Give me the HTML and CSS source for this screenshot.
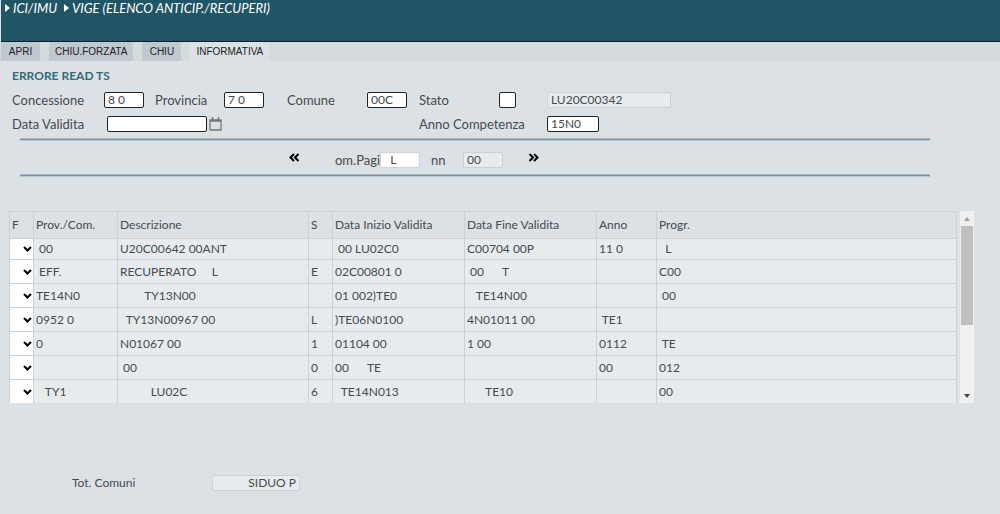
FILE: index.html
```html
<!DOCTYPE html>
<html lang="it">
<head>
<meta charset="utf-8">
<title>ICI/IMU - VIGE</title>
<link rel="stylesheet" href="styles.css">
</head>
<body>
<header class="banner">
  <nav class="crumbs">
    <span class="crumb"><svg class="arrow" viewBox="0 0 5 8"><path d="M0 0L5 4L0 8Z"/></svg>ICI/IMU</span>
    <span class="crumb"><svg class="arrow" viewBox="0 0 5 8"><path d="M0 0L5 4L0 8Z"/></svg>VIGE (ELENCO ANTICIP./RECUPERI)</span>
  </nav>
</header>
<div class="tabs">
  <button class="tab" type="button">APRI</button>
  <button class="tab" type="button">CHIU.FORZATA</button>
  <button class="tab" type="button">CHIU</button>
  <button class="tab active" type="button">INFORMATIVA</button>
</div>
<main>
  <h1 class="message">ERRORE READ TS</h1>
  <form class="filters">
    <label for="conc">Concessione</label>
    <input class="field short" id="conc" value="8 0">
    <label for="prov">Provincia</label>
    <input class="field short" id="prov" value="7 0">
    <label for="com">Comune</label>
    <input class="field short" id="com" value="00C">
    <label for="stato">Stato</label>
    <input class="field tiny" id="stato">
    <input class="field wide readonly" aria-label="Descrizione stato" value="LU20C00342" readonly>
    <label for="data">Data Validita</label>
    <div class="date">
      <input class="field date-input" id="data">
      <button class="calendar" type="button" aria-label="Calendario"><svg viewBox="0 0 13 15"><path d="M1 3H12V13H1ZM1 4H12" fill="none" stroke="#777" stroke-width="1.3"/><path d="M3.5 0V3M9.5 0V3" stroke="#777" stroke-width="1.5"/></svg></button>
    </div>
    <label class="anno-label" for="anno">Anno Competenza</label>
    <input class="field anno" id="anno" value="15N0">
  </form>
  <section class="pager">
    <button class="page-button" type="button" aria-label="Precedente"><svg viewBox="0 0 11 9"><path d="M5 1L1.5 4.5L5 8M9.5 1L6 4.5L9.5 8"/></svg></button>
    <label class="page-label" for="pag">om.Pagi</label>
    <input class="field short plain" id="pag" value="  L">
    <label class="page-label" for="tot">nn</label>
    <input class="field short readonly" id="tot" value="00" readonly>
    <button class="page-button" type="button" aria-label="Successiva"><svg viewBox="0 0 11 9"><path d="M1.5 1L5 4.5L1.5 8M6 1L9.5 4.5L6 8"/></svg></button>
  </section>
  <section class="list">
    <div class="viewport">
      <table class="grid">
        <colgroup><col class="c-f"><col class="c-prov"><col class="c-desc"><col class="c-s"><col class="c-date"><col class="c-date"><col class="c-anno"><col></colgroup>
        <thead>
          <tr><th>F</th><th>Prov./Com.</th><th>Descrizione</th><th>S</th><th>Data Inizio Validita</th><th>Data Fine Validita</th><th>Anno</th><th>Progr.</th></tr>
        </thead>
        <tbody>
          <tr><td class="pick"><div class="select"><select aria-label="F riga 1"><option></option></select><svg viewBox="0 0 9 6"><path d="M1 1L4.5 4.5L8 1"/></svg></div></td><td> 00</td><td>U20C00642 00ANT</td><td></td><td> 00 LU02C0</td><td>C00704 00P</td><td>11 0</td><td>  L</td></tr>
          <tr><td class="pick"><div class="select"><select aria-label="F riga 2"><option></option></select><svg viewBox="0 0 9 6"><path d="M1 1L4.5 4.5L8 1"/></svg></div></td><td> EFF.</td><td>RECUPERATO     L</td><td>E</td><td>02C00801 0</td><td> 00      T</td><td></td><td>C00</td></tr>
          <tr><td class="pick"><div class="select"><select aria-label="F riga 3"><option></option></select><svg viewBox="0 0 9 6"><path d="M1 1L4.5 4.5L8 1"/></svg></div></td><td>TE14N0</td><td>        TY13N00</td><td></td><td>01 002)TE0</td><td>   TE14N00</td><td></td><td> 00</td></tr>
          <tr><td class="pick"><div class="select"><select aria-label="F riga 4"><option></option></select><svg viewBox="0 0 9 6"><path d="M1 1L4.5 4.5L8 1"/></svg></div></td><td>0952 0</td><td>  TY13N00967 00</td><td>L</td><td>)TE06N0100</td><td>4N01011 00</td><td> TE1</td><td></td></tr>
          <tr><td class="pick"><div class="select"><select aria-label="F riga 5"><option></option></select><svg viewBox="0 0 9 6"><path d="M1 1L4.5 4.5L8 1"/></svg></div></td><td>0</td><td>N01067 00</td><td>1</td><td>01104 00</td><td>1 00</td><td>0112</td><td> TE</td></tr>
          <tr><td class="pick"><div class="select"><select aria-label="F riga 6"><option></option></select><svg viewBox="0 0 9 6"><path d="M1 1L4.5 4.5L8 1"/></svg></div></td><td></td><td> 00</td><td>0</td><td>00      TE</td><td></td><td>00</td><td>012</td></tr>
          <tr><td class="pick"><div class="select"><select aria-label="F riga 7"><option></option></select><svg viewBox="0 0 9 6"><path d="M1 1L4.5 4.5L8 1"/></svg></div></td><td>   TY1</td><td>          LU02C</td><td>6</td><td>  TE14N013</td><td>      TE10</td><td></td><td>00</td></tr>
        </tbody>
      </table>
    </div>
    <div class="scrollbar">
      <svg class="up" viewBox="0 0 6 4"><path d="M0 4L3 0L6 4Z"/></svg>
      <div class="thumb"></div>
      <svg class="down" viewBox="0 0 6 4"><path d="M0 0L3 4L6 0Z"/></svg>
    </div>
  </section>
  <footer class="totals">
    <label for="totcom">Tot. Comuni</label>
    <input class="field total readonly" id="totcom" value="SIDUO P" readonly>
  </footer>
</main>
</body>
</html>
```
FILE: styles.css
```css
* { box-sizing: border-box; }
body {
  margin: 0;
  background: #dce1e5;
  color: #454b4f;
  font-family: Lato, "Noto Sans", sans-serif;
  font-size: 12px;
  line-height: 16px;
}
button, input, select { font: inherit; color: inherit; margin: 0; padding: 0; border: 0; background: none; }
svg { display: block; }

.banner {
  height: 42px;
  margin-left: 1px;
  background: #205566;
  border-bottom: 1px solid #0c1e25;
  color: #fff;
}
.crumbs { display: flex; gap: 7px; padding-left: 4px; }
.crumb { display: flex; align-items: center; gap: 3px; font-size: 13px; font-style: italic; }
.arrow { width: 5px; height: 8px; fill: #fff; }

.tabs { display: flex; gap: 9px; padding-left: 1px; background: #d5dadd; }
.tab {
  min-width: 39px;
  height: 19px;
  padding: 0 6px;
  border-radius: 2px 2px 0 0;
  background: #c0c8d0;
  color: #222;
  font: 10px "Liberation Sans", sans-serif;
}
.tab.active { background: #dce1e5; }

.message { margin: 7px 0 0 12px; color: #326a7b; font-size: 12px; line-height: 16px; font-weight: 700; }

.filters {
  display: grid;
  grid-template-columns: 92px 51px 69px 63px 80px 52px 80px 48px auto;
  grid-auto-rows: 24px;
  align-items: center;
  justify-content: start;
  margin: 4px 0 0 12px;
}
.filters label { font-size: 13px; }
.field { height: 16px; padding: 0 3px; border: 1px solid #222; border-radius: 2px; background: #fff; white-space: pre; }
.short { width: 40px; }
.tiny { width: 17px; }
.wide { width: 124px; }
.anno { width: 52px; }
.date { grid-column: 2 / 7; display: flex; align-items: center; gap: 2px; padding-left: 3px; }
.date-input { width: 100px; }
.calendar svg { width: 13px; height: 15px; }
.anno-label { grid-column: span 2; }
.readonly { background: #e7ebee; border-color: #cdd1d3; }
.plain { border-color: #d0d3d5; }

.pager {
  display: grid;
  grid-template-columns: 46px 45px 51px 32px 65px auto;
  align-items: center;
  justify-content: start;
  height: 37px;
  margin: 3px 70px 0 20px;
  padding: 4px 0 0 269px;
  border-top: 1px solid #7594a0;
  border-bottom: 1px solid #7594a0;
  box-shadow: 0 1px #b8c8cf, 0 -1px #a9bdc6, inset 0 1px #b8c8cf, inset 0 -1px #a9bdc6;
}
.page-label { font-size: 13px; white-space: nowrap; }
.page-button { width: 11px; padding-bottom: 4px; }
.page-button svg { width: 11px; height: 9px; fill: none; stroke: #000; stroke-width: 2; }

.list { display: flex; gap: 3px; margin: 35px 26px 0 9px; }
.viewport { flex: 1; height: 192px; overflow: hidden; }
.grid { width: 100%; table-layout: fixed; border-collapse: collapse; }
.c-f, .c-s { width: 24px; }
.c-prov { width: 84px; }
.c-desc { width: 191px; }
.c-date { width: 132px; }
.c-anno { width: 60px; }
.grid th, .grid td {
  height: 24px;
  padding: 0 2px;
  border: 1px solid #cdd0d2;
  text-align: left;
  font-weight: 400;
  white-space: pre;
}
.grid th { height: 27px; }
.grid td { background: #e7ebee; }
.grid tbody tr:first-child td { height: 21px; }
.grid td.pick { padding: 0; background: #fff; }
.select { display: grid; align-items: center; }
.select select, .select svg { grid-area: 1 / 1; }
.select select { width: 100%; height: 16px; appearance: none; }
.select svg { justify-self: end; width: 9px; height: 6px; margin-right: 1px; fill: none; stroke: #000; stroke-width: 2; pointer-events: none; }

.scrollbar {
  display: flex;
  flex-direction: column;
  align-items: center;
  width: 14px;
  padding: 6px 1px 5px;
  background: #f0f0f0;
}
.scrollbar svg { width: 6px; height: 4px; }
.up { fill: #a0a0a0; }
.down { fill: #444; margin-top: auto; }
.thumb { width: 100%; height: 99px; margin-top: 5px; background: #c0c0c0; }

.totals { display: flex; align-items: center; margin: 72px 0 0 72px; }
.totals label { width: 140px; }
.total { width: 88px; text-align: right; }
```
